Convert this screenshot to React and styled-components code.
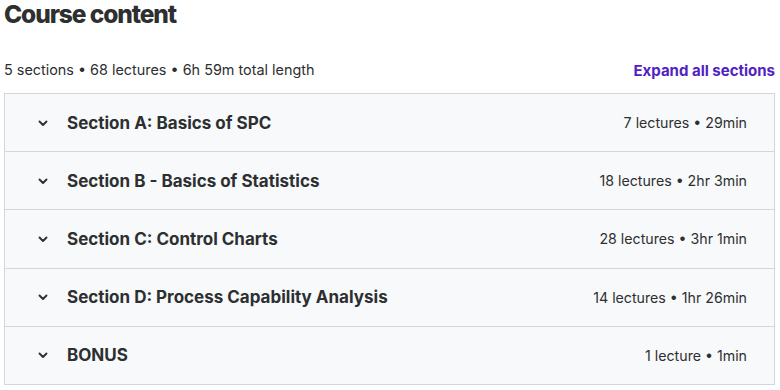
import React from "react";
import styled, { createGlobalStyle } from "styled-components";

const Global = createGlobalStyle`
  html, body { margin: 0; padding: 0; background: #fff; }
  body { font-family: Inter, "Noto Sans", sans-serif; color: #2d2f31; }
`;

const Page = styled.div`
  padding: 0 5px 0 4px;
  width: 771px;
`;

const Title = styled.h2`
  margin: 0;
  font-size: 24.5px;
  font-weight: 800;
  line-height: 28px;
  letter-spacing: -1.1px;
`;

const Meta = styled.div`
  display: flex;
  justify-content: space-between;
  align-items: center;
  margin-top: 31px;
  height: 20px;
  margin-bottom: 14px;
`;

const Summary = styled.span`
  font-size: 14.4px;
  color: #2d2f31;
`;

const ExpandLink = styled.button`
  border: 0;
  background: none;
  padding: 0;
  margin-top: 2px;
  font-family: inherit;
  font-size: 15px;
  font-weight: 700;
  color: #5022c3;
  cursor: pointer;
`;

const Table = styled.div`
  border: 1px solid #d1d7dc;
  border-bottom: 0;
`;

const Row = styled.div`
  display: flex;
  align-items: center;
  height: 57.2px;
  padding: 0 27px 0 32px;
  background: #f7f9fa;
  border-bottom: 1px solid #d1d7dc;
`;

const Chevron = styled.svg`
  width: 12px;
  height: 12px;
  flex: none;
  margin-right: 18px;
`;

const SectionTitle = styled.span`
  flex: 1;
  font-size: 17px;
  font-weight: 700;
  color: #2d2f31;
`;

const SectionMeta = styled.span`
  font-size: 14.2px;
  color: #2d2f31;
`;

const sections = [
  ["Section A: Basics of SPC", "7 lectures • 29min"],
  ["Section B - Basics of Statistics", "18 lectures • 2hr 3min"],
  ["Section C: Control Charts", "28 lectures • 3hr 1min"],
  ["Section D: Process Capability Analysis", "14 lectures • 1hr 26min"],
  ["BONUS", "1 lecture • 1min"],
];

export default function App() {
  return (
    <Page>
      <Global />
      <Title>Course content</Title>
      <Meta>
        <Summary>5 sections • 68 lectures • 6h 59m total length</Summary>
        <ExpandLink>Expand all sections</ExpandLink>
      </Meta>
      <Table>
        {sections.map(([t, m]) => (
          <Row key={t}>
            <Chevron viewBox="0 0 12 12">
              <path d="M2.5 4.5 L6 8 L9.5 4.5" fill="none" stroke="#2d2f31" strokeWidth="1.9" strokeLinecap="round" strokeLinejoin="round" />
            </Chevron>
            <SectionTitle>{t}</SectionTitle>
            <SectionMeta>{m}</SectionMeta>
          </Row>
        ))}
      </Table>
    </Page>
  );
}
